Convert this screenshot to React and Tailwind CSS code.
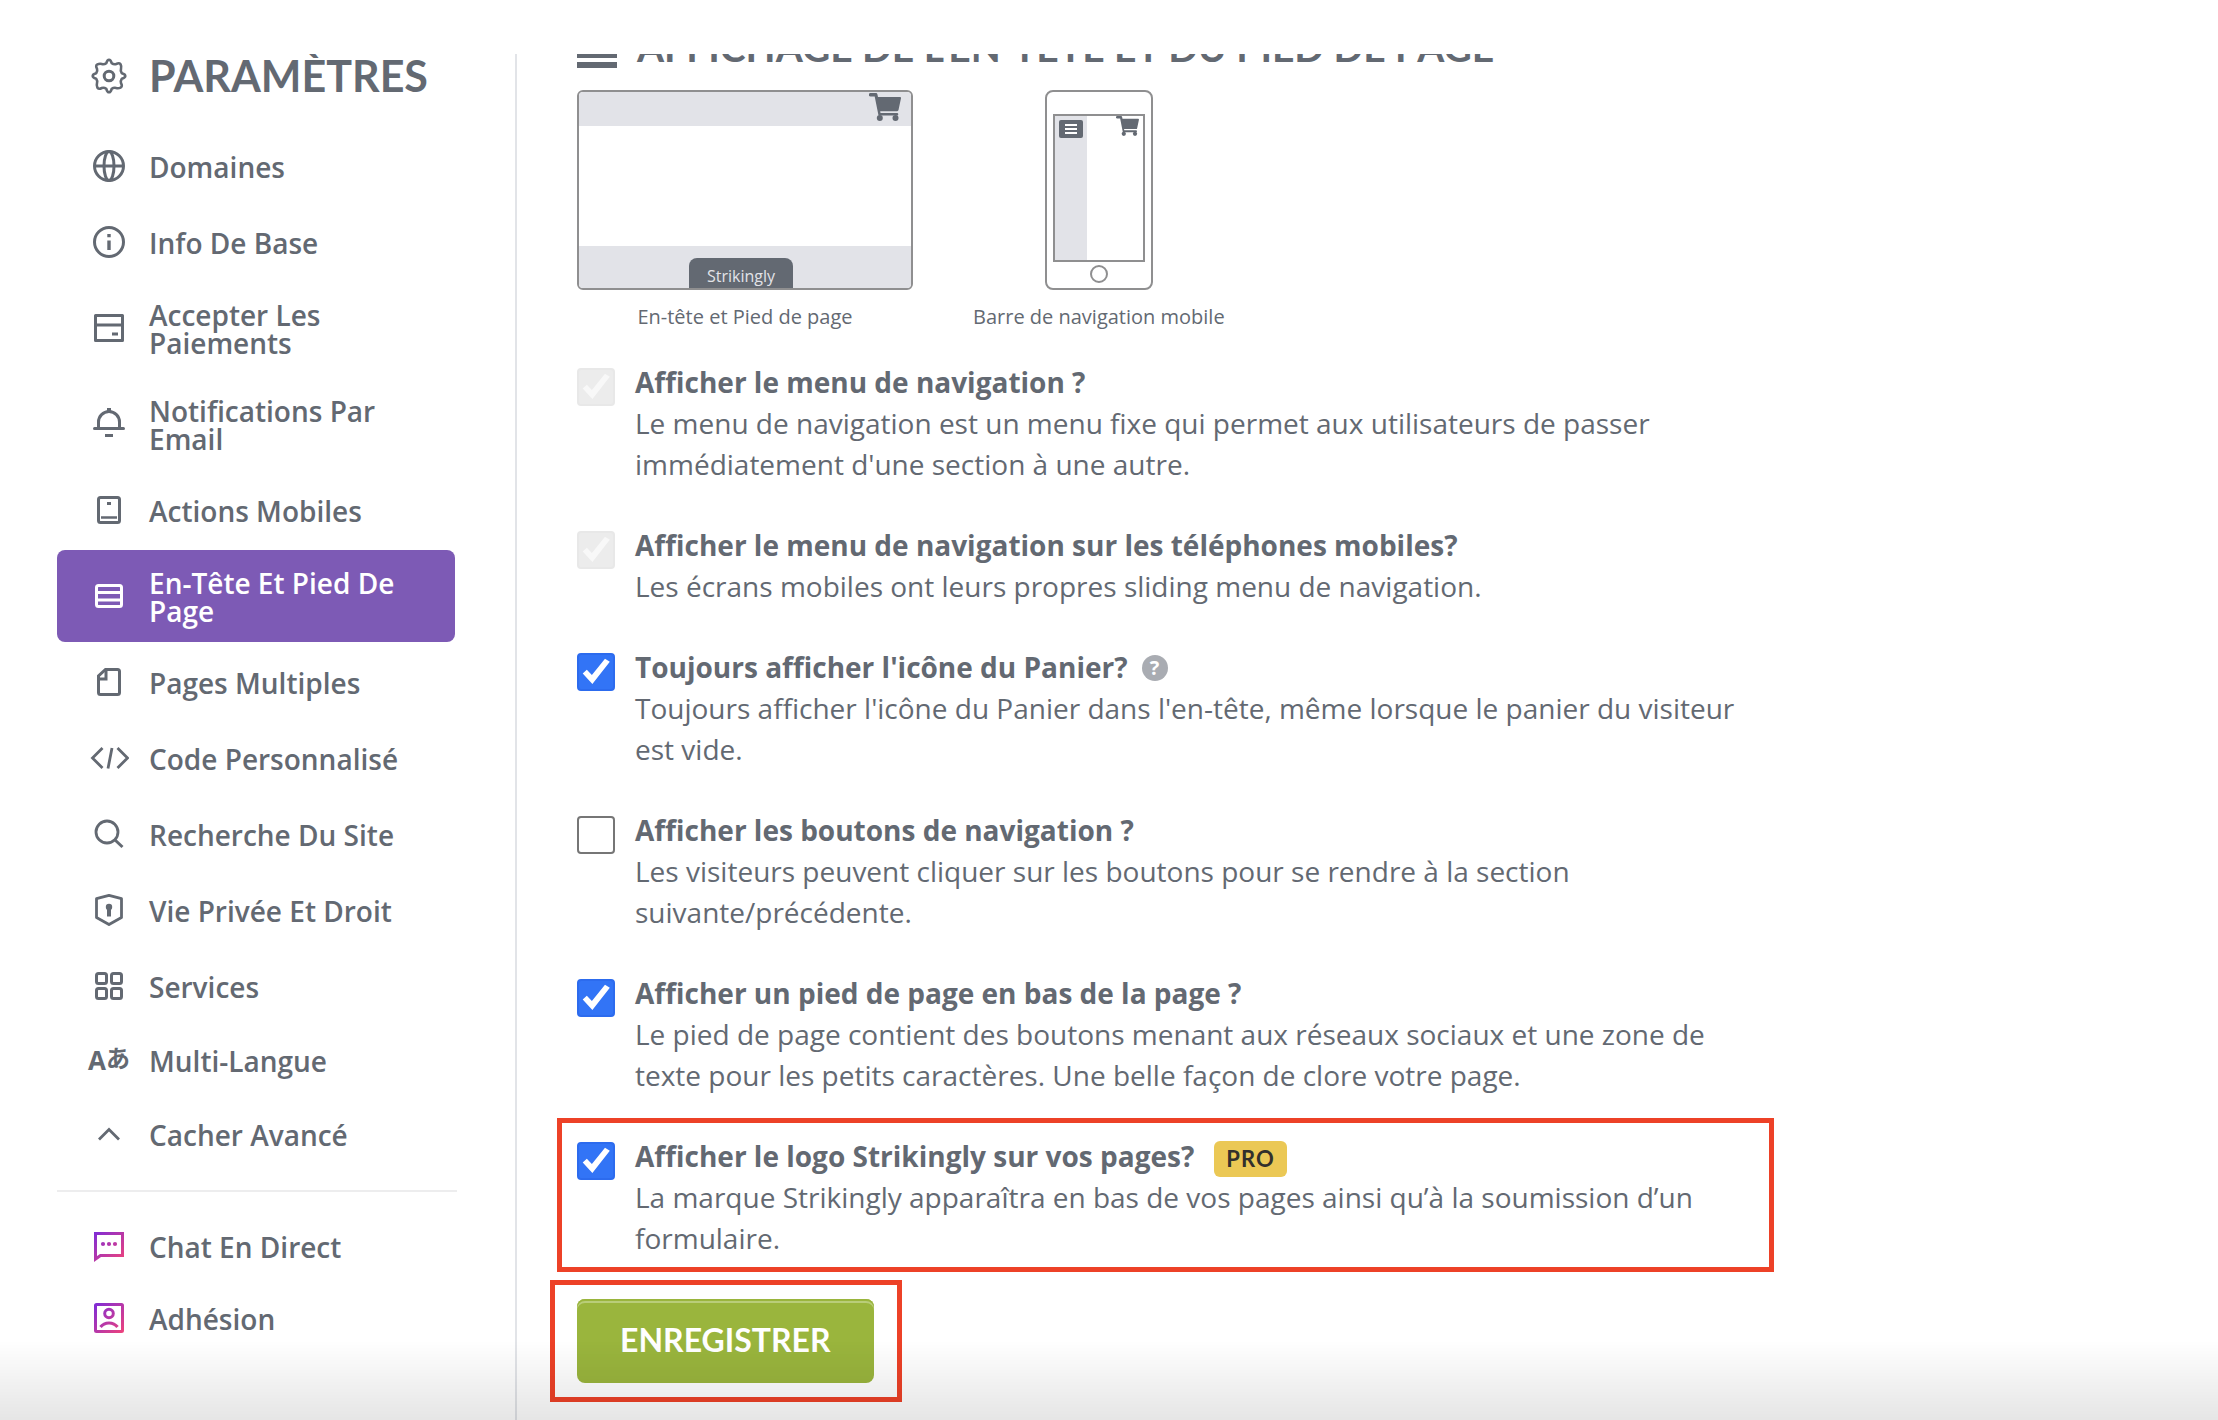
import React, { useState } from 'react';

// ---- sidebar icons ----

const Icon = ({ children, ...rest }) => (
  <svg
    width="40"
    height="40"
    viewBox="0 0 40 40"
    fill="none"
    stroke="currentColor"
    strokeWidth="3"
    className="shrink-0"
    aria-hidden="true"
    {...rest}
  >
    {children}
  </svg>
);

const GearIcon = () => (
  <Icon strokeWidth="2.6" strokeLinejoin="round">
    <path d="M17.3 7.2Q18.300 3.700 20 3.700T22.700 7.200Q25 8.800 27.200 8Q30.500 6.200 31.600 8.400T32 12.800Q31.200 15 32.800 17.300Q36.300 18.300 36.300 20T32.800 22.700Q31.200 25 32 27.200Q33.800 30.500 31.600 31.600T27.200 32Q25 31.200 22.700 32.800Q21.700 36.300 20 36.300T17.300 32.800Q15 31.200 12.800 32Q9.500 33.800 8.400 31.600T8 27.200Q8.800 25 7.200 22.700Q3.700 21.700 3.700 20T7.200 17.300Q8.800 15 8 12.800Q6.200 9.500 8.400 8.400T12.800 8Q15 8.800 17.300 7.200z" />
    <circle cx="20" cy="20" r="4.800" strokeWidth="3" />
  </Icon>
);

const GlobeIcon = () => (
  <Icon>
    <circle cx="20" cy="20" r="14.500" />
    <ellipse cx="20" cy="20" rx="5" ry="14.500" />
    <path d="M5.500 20h29" />
  </Icon>
);

const InfoIcon = () => (
  <Icon>
    <circle cx="20" cy="20" r="14.500" />
    <path d="M20 12v3.200M20 18.500V28" strokeWidth="3.400" />
  </Icon>
);

const CardIcon = () => (
  <Icon strokeLinejoin="round">
    <rect x="6.500" y="7.500" width="27" height="25" />
    <path d="M6.500 17h27M23 26h6" />
  </Icon>
);

const BellIcon = () => (
  <Icon>
    <path d="M9.500 24v-6a10.500 10.500 0 0 1 21 0v6" />
    <path d="M5.500 24.500h29" strokeLinecap="round" />
    <path d="M16 31.500h8M18 5.500h4" />
  </Icon>
);

const MobileIcon = () => (
  <Icon>
    <rect x="9.500" y="7.500" width="21" height="25" rx="2" />
    <path d="M12 27.500h16" strokeWidth="2.500" />
    <path d="M18 13.500h4" />
  </Icon>
);

const LayoutIcon = () => (
  <Icon>
    <rect x="7.500" y="9.500" width="25" height="21" rx="2" />
    <path d="M7.500 16.500h25M7.500 24h25" />
  </Icon>
);

const PageIcon = () => (
  <Icon>
    <path d="M16.500 7.500h12a2 2 0 0 1 2 2v21a2 2 0 0 1-2 2h-17a2 2 0 0 1-2-2V14z" />
    <path d="M17 7.500v9.500H9.500" />
  </Icon>
);

const CodeIcon = () => (
  <Icon strokeWidth="2.800">
    <path d="M13.500 10L3.500 20l10 10M28.500 10l10 10-10 10M23 10l-4 20.500" />
  </Icon>
);

const SearchIcon = () => (
  <Icon strokeWidth="2.800">
    <circle cx="18" cy="18" r="11" />
    <path d="M26 26l7.500 7" strokeWidth="3" />
  </Icon>
);

const ShieldIcon = () => (
  <Icon strokeWidth="2.800">
    <path d="M20 5.300l12.500 3.400v18.800L20 34.500 7.500 27.500V8.700z" strokeLinejoin="round" />
    <path d="M20 17v9.500" strokeWidth="4" />
    <circle cx="20" cy="17" r="3.200" fill="currentColor" stroke="none" />
  </Icon>
);

const GridIcon = () => (
  <Icon>
    <rect x="7.500" y="7.500" width="10" height="10" rx="2" />
    <rect x="22.500" y="7.500" width="10" height="10" rx="2" />
    <rect x="7.500" y="22.500" width="10" height="10" rx="2" />
    <rect x="22.500" y="22.500" width="10" height="10" rx="2" />
  </Icon>
);

const LanguageIcon = () => (
  <span className="flex h-10 w-10 shrink-0 items-center justify-center leading-none font-bold" aria-hidden="true">
    <span className="font-['Open_Sans',sans-serif] text-[26px]">A</span>
    <span className="pb-1.5 font-['Noto_Sans_CJK_JP',sans-serif] text-2xl leading-none">あ</span>
  </span>
);

const ChevronUpIcon = () => (
  <Icon strokeWidth="2.800">
    <path d="M10 25.500l10-10 10 10" />
  </Icon>
);

const PinkGradient = ({ id }) => (
  <defs>
    <linearGradient id={id} x1="5" y1="5" x2="35" y2="35" gradientUnits="userSpaceOnUse">
      <stop offset="0" stopColor="#7b2bd9" />
      <stop offset="1" stopColor="#f0437a" />
    </linearGradient>
  </defs>
);

const ChatIcon = () => (
  <Icon stroke="url(#chat-stroke)">
    <PinkGradient id="chat-stroke" />
    <path d="M6.500 7.500h27v22H11.500L6.500 33z" />
    <g fill="url(#chat-stroke)" stroke="none">
      <circle cx="14" cy="18" r="2.100" />
      <circle cx="20" cy="18" r="2.100" />
      <circle cx="26" cy="18" r="2.100" />
    </g>
  </Icon>
);

const MemberIcon = () => (
  <Icon stroke="url(#member-stroke)">
    <PinkGradient id="member-stroke" />
    <rect x="6.500" y="6.500" width="27" height="27" rx="1" />
    <circle cx="20" cy="15.500" r="4.300" />
    <path d="M11.500 29c4-5.500 13-5.500 17 0" />
  </Icon>
);

const CartIcon = ({ className }) => (
  <svg viewBox="0 0 32 28" className={className} fill="currentColor" aria-hidden="true">
    <path d="M1.500 0H7a1.500 1.500 0 0 1 1.400 1.200L9 4h22a1 1 0 0 1 1 1.200L29.500 17a1.500 1.500 0 0 1-1.400 1.200H11.200l.3 1.800H28a1.300 1.300 0 0 1 0 2.600H9.500L5.700 3.500H1.500a1.700 1.700 0 0 1 0-3.500z" />
    <circle cx="10.800" cy="25" r="3" />
    <circle cx="26.500" cy="25" r="3" />
  </svg>
);

// ---- data ----

const mainLinks = [
  { label: 'Domaines', icon: GlobeIcon },
  { label: 'Info De Base', icon: InfoIcon },
  { label: 'Accepter Les Paiements', icon: CardIcon },
  { label: 'Notifications Par Email', icon: BellIcon },
  { label: 'Actions Mobiles', icon: MobileIcon },
  { label: 'En-Tête Et Pied De Page', icon: LayoutIcon, active: true },
  { label: 'Pages Multiples', icon: PageIcon },
  { label: 'Code Personnalisé', icon: CodeIcon },
  { label: 'Recherche Du Site', icon: SearchIcon },
  { label: 'Vie Privée Et Droit', icon: ShieldIcon },
  { label: 'Services', icon: GridIcon },
];

const advancedLinks = [
  { label: 'Multi-Langue', icon: LanguageIcon },
  { label: 'Cacher Avancé', icon: ChevronUpIcon },
];

const helpLinks = [
  { label: 'Chat En Direct', icon: ChatIcon },
  { label: 'Adhésion', icon: MemberIcon },
];

const options = [
  {
    id: 'nav-menu',
    title: 'Afficher le menu de navigation ?',
    text: "Le menu de navigation est un menu fixe qui permet aux utilisateurs de passer immédiatement d'une section à une autre.",
    checked: true,
    disabled: true,
  },
  {
    id: 'mobile-nav-menu',
    title: 'Afficher le menu de navigation sur les téléphones mobiles?',
    text: 'Les écrans mobiles ont leurs propres sliding menu de navigation.',
    checked: true,
    disabled: true,
  },
  {
    id: 'cart-icon',
    title: "Toujours afficher l'icône du Panier?",
    text: "Toujours afficher l'icône du Panier dans l'en-tête, même lorsque le panier du visiteur est vide.",
    checked: true,
    help: true,
  },
  {
    id: 'nav-buttons',
    title: 'Afficher les boutons de navigation ?',
    text: 'Les visiteurs peuvent cliquer sur les boutons pour se rendre à la section suivante/précédente.',
    checked: false,
  },
  {
    id: 'footer',
    title: 'Afficher un pied de page en bas de la page ?',
    text: 'Le pied de page contient des boutons menant aux réseaux sociaux et une zone de texte pour les petits caractères. Une belle façon de clore votre page.',
    checked: true,
  },
];

const logoOption = {
  id: 'logo',
  title: 'Afficher le logo Strikingly sur vos pages?',
  text: 'La marque Strikingly apparaîtra en bas de vos pages ainsi qu’à la soumission d’un formulaire.',
  checked: true,
  pro: true,
};

// ---- components ----

function NavList({ links, className }) {
  return (
    <ul className={`flex flex-col ${className}`}>
      {links.map(({ label, icon: LinkIcon, active }) => (
        <li key={label} className="pr-0.5">
          <a
            href="#"
            aria-current={active ? 'page' : undefined}
            className={`flex min-h-18 items-center gap-5 rounded-lg pt-[19px] pr-10 pb-[17px] pl-8 text-[28px] leading-7 font-semibold ${
              active ? 'bg-[#7d5ab5] text-white' : ''
            }`}
          >
            <span className="-mt-[9px] -mb-[7px] flex shrink-0">
              <LinkIcon />
            </span>
            {label}
          </a>
        </li>
      ))}
    </ul>
  );
}

function Sidebar() {
  return (
    <aside className="w-[517px] shrink-0 border-r-2 border-[#e2e4e8] pr-[58px] pl-[57px]">
      <h1 className="flex h-[76px] items-start gap-5 pl-8 font-['Lato',sans-serif] text-[43px] leading-[43px] font-bold">
        <span className="flex h-[43px] shrink-0 items-center">
          <GearIcon />
        </span>
        PARAMÈTRES
      </h1>
      <nav aria-label="Paramètres">
        <NavList links={mainLinks} className="gap-1" />
        <NavList links={advancedLinks} className="mt-0.5 gap-0.5" />
        <hr className="mt-5 mb-[18px] border-t-2 border-[#ededee]" />
        <NavList links={helpLinks} className="" />
      </nav>
    </aside>
  );
}

function Previews() {
  return (
    <div className="flex gap-15 text-xl leading-7">
      <figure>
        <div className="flex h-[200px] w-[336px] flex-col justify-between overflow-hidden rounded-md border-2 border-[#8f8f90]">
          <div className="flex h-[34px] justify-end bg-[#e2e3e8] pr-2.5">
            <CartIcon className="mt-px h-7 w-8" />
          </div>
          <div className="flex h-[42px] items-end bg-[#e2e3e8] pl-[110px]">
            <span className="h-[30px] w-[104px] rounded-t-lg bg-[#636972] pt-1 text-center text-base leading-7 text-[#e2e3e8]">
              Strikingly
            </span>
          </div>
        </div>
        <figcaption className="mt-[13px] text-center">En-tête et Pied de page</figcaption>
      </figure>
      <figure className="flex flex-col items-center">
        <div className="flex h-[200px] w-[108px] flex-col items-center rounded-lg border-2 border-[#8f8f90] pt-[22px]">
          <div className="flex h-[148px] w-[92px] justify-between border-2 border-[#8f8f90] pr-1">
            <div className="w-8 bg-[#e2e3e8] pt-1 pl-1">
              <div className="flex h-[18px] w-6 flex-col items-center justify-center gap-0.5 rounded-xs bg-[#636972]">
                <span className="h-0.5 w-3 bg-white" />
                <span className="h-0.5 w-3 bg-white" />
                <span className="h-0.5 w-3 bg-white" />
              </div>
            </div>
            <CartIcon className="h-5 w-[23px]" />
          </div>
          <span className="mt-[3px] size-[18px] rounded-full border-2 border-[#8f8f90]" />
        </div>
        <figcaption className="mt-[13px] text-center">Barre de navigation mobile</figcaption>
      </figure>
    </div>
  );
}

function Checkbox({ id, checked, disabled, onChange }) {
  return (
    <span className="grid size-[38px] shrink-0">
      <input
        id={id}
        type="checkbox"
        checked={checked}
        disabled={disabled}
        onChange={onChange}
        className="peer col-start-1 row-start-1 size-[38px] appearance-none rounded-sm border-2 border-[#767676] bg-white checked:border-[#2c6bee] checked:bg-[#3274f6] disabled:border-[#e8e8e8] disabled:bg-[#ececec]"
      />
      <svg
        viewBox="0 0 38 38"
        className="pointer-events-none invisible col-start-1 row-start-1 size-[38px] text-white peer-checked:visible peer-disabled:text-[#f8f8f8]"
        fill="currentColor"
        aria-hidden="true"
      >
        <path d="M5.700 20.400l4.100-3.700 5.100 5.300L28 5.700l4.800 3L15.400 31z" />
      </svg>
    </span>
  );
}

function Option({ option }) {
  const [checked, setChecked] = useState(option.checked);

  return (
    <div className="flex gap-5">
      <div className="pt-1.5">
        <Checkbox
          id={option.id}
          checked={checked}
          disabled={option.disabled}
          onChange={(e) => setChecked(e.target.checked)}
        />
      </div>
      <div className="text-[28px] leading-[41px]">
        <div className="flex h-[41px] items-center">
          <label htmlFor={option.id} className="font-bold">
            {option.title}
          </label>
          {option.help && (
            <button
              type="button"
              aria-label="Aide"
              className="ml-3.5 size-[26px] rounded-full bg-[#a9acb2] text-center text-xl leading-[26px] font-bold text-white"
            >
              ?
            </button>
          )}
          {option.pro && (
            <span className="mt-1 ml-5 rounded-md bg-[#ebc855] px-3 font-['Lato',sans-serif] text-[22px] leading-9 font-bold tracking-wider text-[#32302c]">
              PRO
            </span>
          )}
        </div>
        <p>{option.text}</p>
      </div>
    </div>
  );
}

export default function App() {
  return (
    <div className="h-screen overflow-hidden bg-white pt-[54px] font-['Open_Sans',sans-serif] text-[#636972]">
      <div className="flex h-full overflow-hidden">
        <Sidebar />
        <main className="min-w-0 flex-1 pl-[60px]">
          <h2 className="-mt-5 mb-3.5 flex h-[42px] items-start gap-5 font-['Lato',sans-serif] text-[39px] leading-[26px] font-bold whitespace-nowrap">
            <span className="mt-2 flex w-10 shrink-0 flex-col gap-1">
              <span className="h-1.5 bg-current" />
              <span className="h-1.5 bg-current" />
              <span className="h-1.5 bg-current" />
            </span>
            AFFICHAGE DE L'EN-TÊTE ET DU PIED DE PAGE
          </h2>
          <Previews />
          <form className="mt-[31px] max-w-[1183px]" onSubmit={(e) => e.preventDefault()}>
            <div className="flex flex-col gap-10">
              {options.map((option) => (
                <Option key={option.id} option={option} />
              ))}
            </div>
            <div className="mt-[22px] -mr-3.5 -ml-5 border-5 border-[#ed4127] pt-[13px] pr-[9px] pb-2 pl-[15px]">
              <Option option={logoOption} />
            </div>
            <div className="mt-2 -ml-[27px] w-fit border-5 border-[#ed4127] py-3.5 pr-[23px] pl-[22px]">
              <button
                type="submit"
                className="h-[84px] rounded-lg bg-[#9ab53d] px-[43px] pb-0.5 font-['Lato',sans-serif] text-[32px] leading-10 font-bold text-white shadow-[inset_0_2px_0_#9ab53d,inset_0_4px_0_#b9cd79]"
              >
                ENREGISTRER
              </button>
            </div>
          </form>
        </main>
      </div>
      <div className="pointer-events-none fixed inset-x-0 bottom-0 h-20 bg-linear-to-b from-transparent to-black/10" />
    </div>
  );
}
